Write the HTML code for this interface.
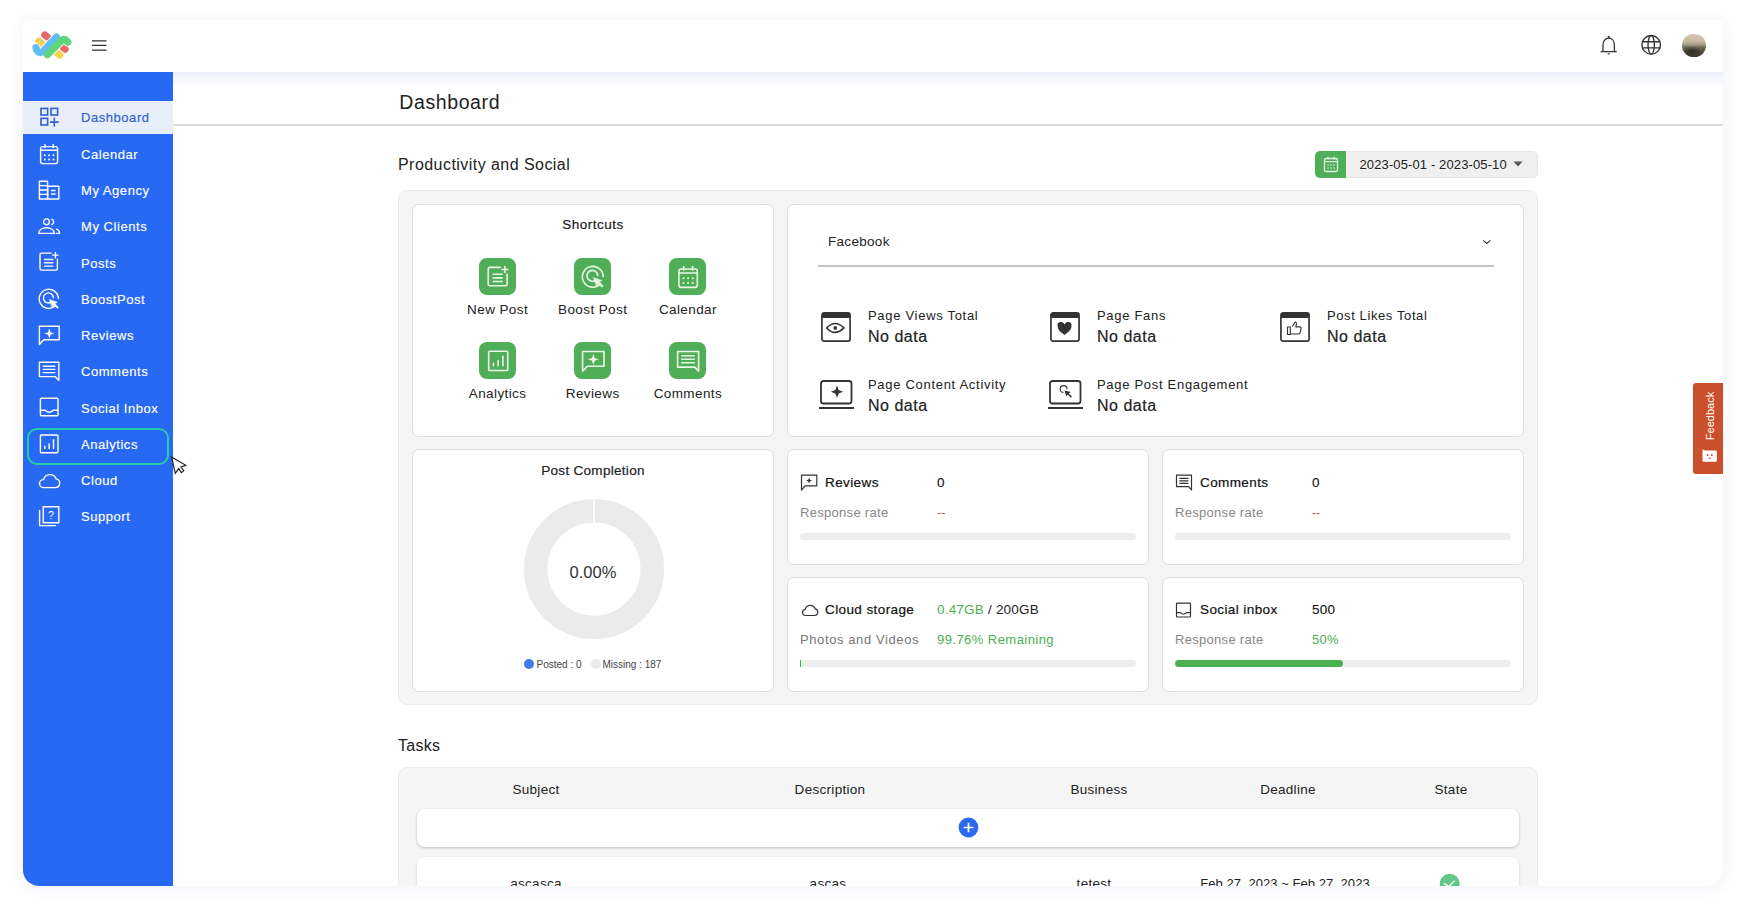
<!DOCTYPE html>
<html><head><meta charset="utf-8">
<style>
*{box-sizing:border-box;margin:0;padding:0}
html,body{width:1746px;height:914px;overflow:hidden;background:#fff;font-family:"Liberation Sans",sans-serif;color:#222}
.a{position:absolute}
.t{position:absolute;white-space:nowrap;line-height:1}
#frame{left:23px;top:20px;width:1700px;height:866px;border-radius:5px 5px 16px 16px;background:#fff;box-shadow:0 2px 16px rgba(40,60,150,0.07);overflow:hidden}
#hdr{left:23px;top:20px;width:1700px;height:52px;background:#fff;border-radius:5px 5px 0 0}
#hshadow{left:173px;top:72px;width:1550px;height:17px;background:linear-gradient(rgba(60,90,200,0.095),rgba(60,90,200,0.03) 60%,rgba(60,90,200,0))}
#side{left:23px;top:72px;width:150px;height:814px;background:#2869f4;border-bottom-left-radius:16px}
.si{position:absolute;left:23px;width:150px;height:33px}
.si svg{position:absolute}
.si span{position:absolute;left:58px;top:0;font-size:13px;line-height:33px;color:#fff;white-space:nowrap;letter-spacing:0.55px;-webkit-text-stroke:0.15px currentColor}

.card{position:absolute;background:#fff;border:1px solid #dedede;border-radius:7px}
.gbtn{position:absolute;width:37.5px;height:37.5px;background:#4fae57;border-radius:8px}
.gbtn svg{position:absolute;left:7px;top:7px}
.lbl{position:absolute;white-space:nowrap;font-size:13.5px;line-height:16px;color:#222;text-align:center;width:120px}
.mt{position:absolute;white-space:nowrap;font-size:13px;line-height:16px;color:#222}
.md{position:absolute;white-space:nowrap;font-size:16px;line-height:18px;color:#222;font-weight:bold}
.bar{position:absolute;height:7px;border-radius:4px;background:#eeeeee}
</style></head><body>
<div id="frame" class="a"></div>
<div id="hshadow" class="a"></div>
<div id="hdr" class="a"></div>
<div id="side" class="a"></div>

<!-- logo -->
<svg class="a" style="left:30px;top:28px" width="44" height="34" viewBox="0 0 44 34">
  <g stroke-linecap="round" fill="none">
    <line x1="14.8" y1="7" x2="17.4" y2="9.2" stroke="#ea6468" stroke-width="7"/>
    <line x1="9" y1="13.2" x2="11.4" y2="15.2" stroke="#f7cd52" stroke-width="7"/>
    <line x1="33" y1="19.4" x2="35.2" y2="21.2" stroke="#ec6a62" stroke-width="7"/>
    <line x1="27.6" y1="25.4" x2="29.8" y2="27.2" stroke="#f7d352" stroke-width="7"/>
    <path d="M6 19.6Q7 25.5 12.5 24L26.5 9" stroke="#fff" stroke-width="9"/>
    <path d="M17 27.2L31.6 12.4Q35 9.6 37.8 14.2" stroke="#fff" stroke-width="9"/>
    <path d="M6 19.6Q7 25.5 12.5 24L26.5 9" stroke="#62bdf2" stroke-width="7.2"/>
    <path d="M17.4 26.8L31.6 12.4Q35 9.6 37.8 14.2" stroke="#5fd57c" stroke-width="7.2"/>
  </g>
</svg>
<!-- hamburger -->
<svg class="a" style="left:91.5px;top:39px" width="15" height="12" viewBox="0 0 15 12">
  <path d="M0 1.8H14.5M0 6.4H14.5M0 11H14.5" stroke="#333" stroke-width="1.25"/>
</svg>

<!-- header right icons -->
<svg class="a" style="left:1598px;top:34px" width="21" height="23" viewBox="0 0 21 23">
  <path d="M5 17.7V11.2C5 7 7.4 4.1 10.7 4.1C14 4.1 16.4 7 16.4 11.2V17.7M2.6 17.7h16.2" stroke="#333" stroke-width="1.3" fill="none"/>
  <circle cx="10.7" cy="2.9" r="1.1" fill="#333"/>
  <path d="M9.1 19.2h3.2l-1.6 1.5z" fill="#333"/>
</svg>
<svg class="a" style="left:1640px;top:34px" width="22" height="22" viewBox="0 0 22 22">
  <g stroke="#333" stroke-width="1.4" fill="none">
    <circle cx="11.2" cy="10.8" r="9.3"/>
    <ellipse cx="11.2" cy="10.8" rx="3.2" ry="9.3"/>
    <path d="M2.4 7.7h17.6M2.4 13.9h17.6"/>
  </g>
</svg>
<div class="a" style="left:1682px;top:33.5px;width:23.5px;height:23.5px;border-radius:50%;background:radial-gradient(ellipse 38% 22% at 42% 74%,rgba(20,18,25,0.6),rgba(20,18,25,0) 100%),linear-gradient(180deg,#d9c4b0 0%,#c9baa0 30%,#a8a088 45%,#6e6a52 58%,#4a4634 80%,#3a3628 100%)"></div>

<!-- sidebar items -->
<div class="si" style="top:101px;background:#e7edf9;"><svg width="24" height="24" viewBox="0 0 24 24" style="left:14px;top:3.8px"><g stroke="#2f5fd3" stroke-width="1.6" fill="none"><rect x="4" y="3.4" width="6.6" height="6.6"/><rect x="14" y="3.4" width="6.6" height="6.6"/><rect x="4" y="13.4" width="6.6" height="6.6"/><path d="M17.3 12.8v8.6M13 17.1h8.6"/></g></svg><span style="color:#2f5fd3">Dashboard</span></div>
<div class="si" style="top:137.77px;"><svg width="24" height="24" viewBox="0 0 24 24" style="left:14px;top:3.8px"><g stroke="#fff" stroke-width="1.4" fill="none" stroke-linecap="round" stroke-linejoin="round"><rect x="3.6" y="4.6" width="17" height="17" rx="2"/><path d="M3.6 8.3h17M8 2.4v3.2M16.2 2.4v3.2"/></g><g fill="#fff"><circle cx="7.8" cy="13.2" r="0.95"/><circle cx="12.1" cy="13.2" r="0.95"/><circle cx="16.5" cy="13.2" r="0.95"/><circle cx="7.8" cy="17.5" r="0.95"/><circle cx="12.1" cy="17.5" r="0.95"/><circle cx="16.5" cy="17.5" r="0.95"/></g></svg><span style="color:#fff">Calendar</span></div>
<div class="si" style="top:174.04px;"><svg width="24" height="24" viewBox="0 0 24 24" style="left:14px;top:3.8px"><g stroke="#fff" stroke-width="1.4" fill="none" stroke-linecap="round" stroke-linejoin="round"><rect x="2.4" y="3.2" width="8.2" height="17.8"/><rect x="10.6" y="8.2" width="11.2" height="12.8"/><path d="M2.4 7.6h8.2M2.4 12h8.2M2.4 16.4h8.2M14.5 12.5h3.5M14.5 16h3.5"/></g></svg><span style="color:#fff">My Agency</span></div>
<div class="si" style="top:210.31px;"><svg width="24" height="24" viewBox="0 0 24 24" style="left:14px;top:3.8px"><g stroke="#fff" stroke-width="1.4" fill="none" stroke-linecap="round" stroke-linejoin="round"><circle cx="9.5" cy="7.8" r="2.9"/><path d="M1.8 19.4c0-3.6 3.4-5.6 7.7-5.6s7.7 2 7.7 5.6z"/><path d="M14.8 5.2a2.9 2.9 0 0 1 0 5.4" /><path d="M19.2 19.4h3.4c0-2.2-1.2-3.6-3.2-4.2"/></g></svg><span style="color:#fff">My Clients</span></div>
<div class="si" style="top:246.58px;"><svg width="24" height="24" viewBox="0 0 24 24" style="left:14px;top:3.8px"><g stroke="#fff" stroke-width="1.4" fill="none" stroke-linecap="round" stroke-linejoin="round"><path d="M14.2 3.1H4.5Q3 3.1 3 4.6V18.6Q3 20.1 4.5 20.1H18.9Q20.4 20.1 20.4 18.6V9.3"/><path d="M18.4 2.4v5.4M15.7 5.1h5.4M7.5 9.5h8.3M7.5 12.8h8.3M7.5 16.1h8.3"/></g></svg><span style="color:#fff">Posts</span></div>
<div class="si" style="top:282.85px;"><svg width="24" height="24" viewBox="0 0 24 24" style="left:14px;top:3.8px"><g stroke="#fff" stroke-width="1.4" fill="none" stroke-linecap="round" stroke-linejoin="round"><path d="M18.6 18.6A9.6 9.6 0 1 1 21.4 11.6"/><path d="M14.8 14.6A5 5 0 1 1 16.4 10.8"/><path d="M12.4 12.4L20.4 15.2L17.9 16.6L21.6 20.3L20.3 21.6L16.6 17.9L15.2 20.4z" fill="#fff" stroke="#fff" stroke-width="0.4"/></g></svg><span style="color:#fff">BoostPost</span></div>
<div class="si" style="top:319.12px;"><svg width="24" height="24" viewBox="0 0 24 24" style="left:14px;top:3.8px"><g stroke="#fff" stroke-width="1.4" fill="none" stroke-linecap="round" stroke-linejoin="round"><path d="M2.4 21.4V3.2H22.2V16.8H6.8z"/></g><path d="M12.3 5.6l1.3 3.6 3.6 1.3-3.6 1.3-1.3 3.6-1.3-3.6-3.6-1.3 3.6-1.3z" fill="#fff"/></svg><span style="color:#fff">Reviews</span></div>
<div class="si" style="top:355.39px;"><svg width="24" height="24" viewBox="0 0 24 24" style="left:14px;top:3.8px"><g stroke="#fff" stroke-width="1.4" fill="none" stroke-linecap="round" stroke-linejoin="round"><path d="M2.4 3.2H21.8V21.4L18.2 17.6H2.4z"/><path d="M6.2 7.2h11.6M6.2 10.4h11.6M6.2 13.6h11.6"/></g></svg><span style="color:#fff">Comments</span></div>
<div class="si" style="top:391.66px;"><svg width="24" height="24" viewBox="0 0 24 24" style="left:14px;top:3.8px"><g stroke="#fff" stroke-width="1.4" fill="none" stroke-linecap="round" stroke-linejoin="round"><rect x="3.4" y="3.2" width="17.6" height="17.6" rx="1"/><path d="M3.4 15.2H8.2Q12.2 19.2 16.2 15.2H21"/></g></svg><span style="color:#fff">Social Inbox</span></div>
<div class="si" style="top:427.93px;"><svg width="24" height="24" viewBox="0 0 24 24" style="left:14px;top:3.8px"><g stroke="#fff" stroke-width="1.4" fill="none" stroke-linecap="round" stroke-linejoin="round"><rect x="3.4" y="3" width="17.6" height="17.8" rx="1"/><path d="M7.8 16.4v-2.2M12.1 16.4v-4.6M16.5 16.4V7.6"/></g></svg><span style="color:#fff">Analytics</span></div>
<div class="si" style="top:464.20px;"><svg width="24" height="24" viewBox="0 0 24 24" style="left:14px;top:3.8px"><g stroke="#fff" stroke-width="1.4" fill="none" stroke-linecap="round" stroke-linejoin="round"><path d="M6.4 19.6H18.2A4.4 4.4 0 0 0 19.2 10.9A6.6 6.6 0 0 0 6.6 11.6A4 4 0 0 0 6.4 19.6Z"/></g></svg><span style="color:#fff">Cloud</span></div>
<div class="si" style="top:500.47px;"><svg width="24" height="24" viewBox="0 0 24 24" style="left:14px;top:3.8px"><g stroke="#fff" stroke-width="1.4" fill="none" stroke-linecap="round" stroke-linejoin="round"><rect x="6.2" y="2.8" width="15.6" height="16"/><path d="M2.6 6.4V21.6H18.4"/></g><text x="14" y="15" font-size="10.5" fill="#fff" text-anchor="middle" font-family="Liberation Sans">?</text></svg><span style="color:#fff">Support</span></div>
<div class="a" style="left:27px;top:427.5px;width:142px;height:37px;border:2.3px solid #25cdaa;border-radius:10px"></div>

<!-- main -->
<div class="t" style="left:399.3px;top:90.3px;font-size:19.5px;line-height:24px;color:#222;letter-spacing:0.6px">Dashboard</div>
<div class="a" style="left:173px;top:124px;width:1550px;height:2px;background:#dcdcdc"></div>
<div class="t" style="left:398px;top:155px;font-size:16px;line-height:20px;color:#222;letter-spacing:0.45px">Productivity and Social</div>

<!-- date picker -->
<div class="a" style="left:1315px;top:151px;width:223px;height:27px;background:#efefef;border-radius:5px;border:1px solid #e6e6e6"></div>
<div class="a" style="left:1315px;top:151px;width:31px;height:27px;background:#4fae57;border-radius:5px 0 0 5px"></div>
<svg class="a" style="left:1322px;top:155px" width="18" height="19" viewBox="0 0 18 19"><g stroke="#dff5df" stroke-width="1.3" fill="none"><rect x="2.5" y="3.5" width="13" height="13" rx="1.5"/><path d="M2.5 6.6h13M6 1.8v2.8M12 1.8v2.8"/></g><g fill="#dff5df"><circle cx="6" cy="10" r=".8"/><circle cx="9" cy="10" r=".8"/><circle cx="12" cy="10" r=".8"/><circle cx="6" cy="13" r=".8"/><circle cx="9" cy="13" r=".8"/><circle cx="12" cy="13" r=".8"/></g></svg>
<div class="t" style="left:1359.5px;top:157px;font-size:13px;line-height:16px;color:#222;letter-spacing:0.12px">2023-05-01 - 2023-05-10</div>
<svg class="a" style="left:1513px;top:161px" width="10" height="6" viewBox="0 0 10 6"><path d="M0.5 0.5h9L5 5.5z" fill="#555"/></svg>

<!-- gray panel -->
<div class="a" style="left:398px;top:190px;width:1140px;height:515px;background:#f5f5f5;border:1px solid #ebebeb;border-radius:9px"></div>

<!-- shortcuts card -->
<div class="card" style="left:412px;top:204px;width:362px;height:233px"></div>
<div class="t" style="left:533px;top:217px;width:120px;text-align:center;font-size:13.5px;line-height:16px;color:#222;-webkit-text-stroke:0.2px #222;letter-spacing:0.5px">Shortcuts</div>
<div class="gbtn" style="left:478.6px;top:257.5px"><svg width="26" height="26" viewBox="0 0 24 24" style="left:6px;top:6px"><g stroke="#eaf6e4" stroke-width="1.5" fill="none" stroke-linecap="round" stroke-linejoin="round"><path d="M14.2 3.1H4.5Q3 3.1 3 4.6V18.6Q3 20.1 4.5 20.1H18.9Q20.4 20.1 20.4 18.6V9.3"/><path d="M18.4 2.4v5.4M15.7 5.1h5.4M7.5 9.5h8.3M7.5 12.8h8.3M7.5 16.1h8.3"/></g></svg></div>
<div class="lbl" style="left:437.6px;top:301.5px;letter-spacing:0.4px">New Post</div>
<div class="gbtn" style="left:573.7px;top:257.5px"><svg width="26" height="26" viewBox="0 0 24 24" style="left:6px;top:6px"><g stroke="#eaf6e4" stroke-width="1.5" fill="none" stroke-linecap="round" stroke-linejoin="round"><path d="M18.6 18.6A9.6 9.6 0 1 1 21.4 11.6"/><path d="M14.8 14.6A5 5 0 1 1 16.4 10.8"/><path d="M12.4 12.4L20.4 15.2L17.9 16.6L21.6 20.3L20.3 21.6L16.6 17.9L15.2 20.4z" fill="#eaf6e4" stroke="#eaf6e4" stroke-width="0.4"/></g></svg></div>
<div class="lbl" style="left:532.7px;top:301.5px;letter-spacing:0.4px">Boost Post</div>
<div class="gbtn" style="left:668.9px;top:257.5px"><svg width="26" height="26" viewBox="0 0 24 24" style="left:6px;top:6px"><g stroke="#eaf6e4" stroke-width="1.5" fill="none" stroke-linecap="round" stroke-linejoin="round"><rect x="3.6" y="4.6" width="17" height="17" rx="2"/><path d="M3.6 8.3h17M8 2.4v3.2M16.2 2.4v3.2"/></g><g fill="#eaf6e4"><circle cx="7.8" cy="13.2" r="0.95"/><circle cx="12.1" cy="13.2" r="0.95"/><circle cx="16.5" cy="13.2" r="0.95"/><circle cx="7.8" cy="17.5" r="0.95"/><circle cx="12.1" cy="17.5" r="0.95"/><circle cx="16.5" cy="17.5" r="0.95"/></g></svg></div>
<div class="lbl" style="left:627.9px;top:301.5px;letter-spacing:0.4px">Calendar</div>
<div class="gbtn" style="left:478.6px;top:341.8px"><svg width="26" height="26" viewBox="0 0 24 24" style="left:6px;top:6px"><g stroke="#eaf6e4" stroke-width="1.5" fill="none" stroke-linecap="round" stroke-linejoin="round"><rect x="3.4" y="3" width="17.6" height="17.8" rx="1"/><path d="M7.8 16.4v-2.2M12.1 16.4v-4.6M16.5 16.4V7.6"/></g></svg></div>
<div class="lbl" style="left:437.6px;top:385.8px;letter-spacing:0.4px">Analytics</div>
<div class="gbtn" style="left:573.7px;top:341.8px"><svg width="26" height="26" viewBox="0 0 24 24" style="left:6px;top:6px"><g stroke="#eaf6e4" stroke-width="1.5" fill="none" stroke-linecap="round" stroke-linejoin="round"><path d="M2.4 21.4V3.2H22.2V16.8H6.8z"/></g><path d="M12.3 5.6l1.3 3.6 3.6 1.3-3.6 1.3-1.3 3.6-1.3-3.6-3.6-1.3 3.6-1.3z" fill="#eaf6e4"/></svg></div>
<div class="lbl" style="left:532.7px;top:385.8px;letter-spacing:0.4px">Reviews</div>
<div class="gbtn" style="left:668.9px;top:341.8px"><svg width="26" height="26" viewBox="0 0 24 24" style="left:6px;top:6px"><g stroke="#eaf6e4" stroke-width="1.5" fill="none" stroke-linecap="round" stroke-linejoin="round"><path d="M2.4 3.2H21.8V21.4L18.2 17.6H2.4z"/><path d="M6.2 7.2h11.6M6.2 10.4h11.6M6.2 13.6h11.6"/></g></svg></div>
<div class="lbl" style="left:627.9px;top:385.8px;letter-spacing:0.4px">Comments</div>

<!-- facebook card -->
<div class="card" style="left:787px;top:204px;width:737px;height:233px"></div>
<div class="t" style="left:828px;top:234px;font-size:13.5px;line-height:16px;color:#222;letter-spacing:0.3px">Facebook</div>
<svg class="a" style="left:1482px;top:239px" width="10" height="7" viewBox="0 0 10 7"><path d="M1.1 1.4L4.8 4.5L8.5 1.4" stroke="#333" stroke-width="1.05" fill="none"/></svg>
<div class="a" style="left:818px;top:265px;width:676px;height:1.5px;background:#c4c4c4"></div>
<svg class="a" width="30" height="30" viewBox="0 0 32 32" style="left:821px;top:312px"><rect x="1" y="1" width="30" height="30" rx="2.2" stroke="#333" stroke-width="1.8" fill="none"/><rect x="1" y="1" width="30" height="5.5" rx="1.5" fill="#333"/><path d="M6 17Q15 7.5 24.5 17Q15 26.5 6 17z" stroke="#333" stroke-width="1.7" fill="none" stroke-linecap="round" stroke-linejoin="round"/><circle cx="15.2" cy="17" r="2" fill="#333"/></svg>
<div class="mt" style="left:868px;top:308px;letter-spacing:0.7px">Page Views Total</div>
<div class="md" style="left:868px;top:328px;font-weight:normal;letter-spacing:0.5px;-webkit-text-stroke:0.2px #222">No data</div>
<svg class="a" width="30" height="30" viewBox="0 0 32 32" style="left:1050px;top:312px"><rect x="1" y="1" width="30" height="30" rx="2.2" stroke="#333" stroke-width="1.8" fill="none"/><rect x="1" y="1" width="30" height="5.5" rx="1.5" fill="#333"/><path d="M15.5 24.5C11 21 8.2 18.6 8.2 15.4A3.6 3.6 0 0 1 15.5 13.4A3.6 3.6 0 0 1 22.8 15.4C22.8 18.6 20 21 15.5 24.5z" fill="#333"/></svg>
<div class="mt" style="left:1097px;top:308px;letter-spacing:0.7px">Page Fans</div>
<div class="md" style="left:1097px;top:328px;font-weight:normal;letter-spacing:0.5px;-webkit-text-stroke:0.2px #222">No data</div>
<svg class="a" width="30" height="30" viewBox="0 0 32 32" style="left:1280px;top:312px"><rect x="1" y="1" width="30" height="30" rx="2.2" stroke="#333" stroke-width="1.8" fill="none"/><rect x="1" y="1" width="30" height="5.5" rx="1.5" fill="#333"/><path d="M8 16h3v8H8zM11 23.5h8.5c1.5 0 2-1 2.2-2l.8-4c.2-1-.5-1.6-1.4-1.6h-4.2l.6-3.2c.2-1.2-.6-2-1.4-2l-3 4.8" stroke="#333" stroke-width="1.2" fill="none" stroke-linejoin="round"/></svg>
<div class="mt" style="left:1327px;top:308px;letter-spacing:0.6px">Post Likes Total</div>
<div class="md" style="left:1327px;top:328px;font-weight:normal;letter-spacing:0.5px;-webkit-text-stroke:0.2px #222">No data</div>
<svg class="a" width="38" height="32" viewBox="0 0 38 32" style="left:818px;top:380px"><rect x="3" y="1" width="30.5" height="22.5" rx="2.5" stroke="#333" stroke-width="1.8" fill="none"/><path d="M1 28h35" stroke="#333" stroke-width="2"/><path d="M19 5.6l1.7 4.4 4.4 1.7-4.4 1.7-1.7 4.4-1.7-4.4-4.4-1.7 4.4-1.7z" fill="#333"/></svg>
<div class="mt" style="left:868px;top:377px;letter-spacing:0.7px">Page Content Activity</div>
<div class="md" style="left:868px;top:397px;font-weight:normal;letter-spacing:0.5px;-webkit-text-stroke:0.2px #222">No data</div>
<svg class="a" width="38" height="32" viewBox="0 0 38 32" style="left:1047px;top:380px"><rect x="3" y="1" width="30.5" height="22.5" rx="2.5" stroke="#333" stroke-width="1.8" fill="none"/><path d="M1 28h35" stroke="#333" stroke-width="2"/><path d="M16.4 12.4A3.4 3.4 0 1 1 20 9" stroke="#333" stroke-width="1.1" fill="none"/><path d="M17.6 10.4l1.6 6.2 1.4-2.1 3.2 3.2 1.1-1.1-3.2-3.2 2.1-1.4z" fill="#333"/></svg>
<div class="mt" style="left:1097px;top:377px;letter-spacing:0.7px">Page Post Engagement</div>
<div class="md" style="left:1097px;top:397px;font-weight:normal;letter-spacing:0.5px;-webkit-text-stroke:0.2px #222">No data</div>

<!-- post completion -->
<div class="card" style="left:412px;top:449px;width:362px;height:243px"></div>
<div class="t" style="left:533px;top:463px;width:120px;text-align:center;font-size:13.5px;line-height:16px;color:#222;-webkit-text-stroke:0.2px #222;letter-spacing:0.3px">Post Completion</div>
<svg class="a" style="left:518px;top:493px" width="152" height="152" viewBox="0 0 152 152">
  <circle cx="76" cy="76" r="58.3" stroke="#ebebeb" stroke-width="23.5" fill="none"/>
  <path d="M76 5V29" stroke="#fff" stroke-width="1.6"/>
</svg>
<div class="t" style="left:533px;top:563px;width:120px;text-align:center;font-size:16.5px;line-height:18px;color:#333">0.00%</div>
<div class="a" style="left:523.5px;top:658.5px;width:10px;height:10px;border-radius:50%;background:#3f7de8"></div>
<div class="t" style="left:536.5px;top:658.5px;font-size:10px;line-height:12px;color:#444">Posted : 0</div>
<div class="a" style="left:590.5px;top:658.5px;width:10px;height:10px;border-radius:50%;background:#ebebeb"></div>
<div class="t" style="left:602.5px;top:658.5px;font-size:10px;line-height:12px;color:#444">Missing : 187</div>

<!-- reviews card -->
<div class="card" style="left:787px;top:449px;width:362px;height:116px"></div>
<svg class="a" style="left:800px;top:474px" width="18" height="17" viewBox="0 0 18 17"><path d="M1.5 16V1.2H16.8V11.8H5z" stroke="#333" stroke-width="1.2" fill="none" stroke-linejoin="round"/><path d="M9.1 3.6l.8 2.2 2.2.8-2.2.8-.8 2.2-.8-2.2-2.2-.8 2.2-.8z" fill="#333"/></svg>
<div class="t" style="left:825px;top:475px;font-size:13.5px;line-height:16px;color:#111;-webkit-text-stroke:0.2px #111;letter-spacing:0.4px">Reviews</div>
<div class="t" style="left:937px;top:475px;font-size:13.5px;line-height:16px;color:#111;-webkit-text-stroke:0.1px #111">0</div>
<div class="t" style="left:800px;top:505px;font-size:13px;line-height:16px;color:#888;letter-spacing:0.3px">Response rate</div>
<div class="t" style="left:937px;top:505px;font-size:13px;line-height:16px;color:#e05555">--</div>
<div class="bar" style="left:800px;top:533px;width:336px"></div>

<!-- comments card -->
<div class="card" style="left:1162px;top:449px;width:362px;height:116px"></div>
<svg class="a" style="left:1175px;top:474px" width="18" height="17" viewBox="0 0 18 17"><path d="M1.5 1.2H16.5V15.8L13.6 12.6H1.5z" stroke="#333" stroke-width="1.2" fill="none" stroke-linejoin="round"/><path d="M4.4 4.4h9M4.4 6.9h9M4.4 9.4h9" stroke="#333" stroke-width="1.1"/></svg>
<div class="t" style="left:1200px;top:475px;font-size:13.5px;line-height:16px;color:#111;-webkit-text-stroke:0.2px #111;letter-spacing:0.4px">Comments</div>
<div class="t" style="left:1312px;top:475px;font-size:13.5px;line-height:16px;color:#111;-webkit-text-stroke:0.1px #111">0</div>
<div class="t" style="left:1175px;top:505px;font-size:13px;line-height:16px;color:#888;letter-spacing:0.3px">Response rate</div>
<div class="t" style="left:1312px;top:505px;font-size:13px;line-height:16px;color:#e05555">--</div>
<div class="bar" style="left:1175px;top:533px;width:336px"></div>

<!-- cloud card -->
<div class="card" style="left:787px;top:577px;width:362px;height:115px"></div>
<svg class="a" style="left:800px;top:602px" width="19" height="15" viewBox="0 0 19 15"><path d="M5 13.5H14.5A3.4 3.4 0 0 0 15.2 6.8A5.2 5.2 0 0 0 5.2 7.4A3.1 3.1 0 0 0 5 13.5Z" stroke="#333" stroke-width="1.2" fill="none"/></svg>
<div class="t" style="left:825px;top:602px;font-size:13.5px;line-height:16px;color:#111;-webkit-text-stroke:0.2px #111;letter-spacing:0.4px">Cloud storage</div>
<div class="t" style="left:937px;top:602px;font-size:13.5px;line-height:16px;color:#4caf50;letter-spacing:0.2px">0.47GB</div>
<div class="t" style="left:988px;top:602px;font-size:13.5px;line-height:16px;color:#222;letter-spacing:0.2px">/ 200GB</div>
<div class="t" style="left:800px;top:632px;font-size:13px;line-height:16px;color:#777;letter-spacing:0.6px">Photos and Videos</div>
<div class="t" style="left:937px;top:632px;font-size:13px;line-height:16px;color:#4caf50;letter-spacing:0.45px">99.76% Remaining</div>
<div class="bar" style="left:800px;top:660px;width:336px"></div>
<div class="a" style="left:800px;top:660px;width:1.2px;height:7px;background:#4caf50"></div>

<!-- social inbox card -->
<div class="card" style="left:1162px;top:577px;width:362px;height:115px"></div>
<svg class="a" style="left:1175px;top:602px" width="17" height="16" viewBox="0 0 17 16"><rect x="1.5" y="1.2" width="14" height="13.8" rx="0.8" stroke="#333" stroke-width="1.2" fill="none"/><path d="M1.5 10.6H5.4Q8.5 13.8 11.6 10.6H15.5" stroke="#333" stroke-width="1.1" fill="none"/></svg>
<div class="t" style="left:1200px;top:602px;font-size:13.5px;line-height:16px;color:#111;-webkit-text-stroke:0.2px #111;letter-spacing:0.4px">Social inbox</div>
<div class="t" style="left:1312px;top:602px;font-size:13.5px;line-height:16px;color:#111;-webkit-text-stroke:0.1px #111;letter-spacing:0.3px">500</div>
<div class="t" style="left:1175px;top:632px;font-size:13px;line-height:16px;color:#888;letter-spacing:0.3px">Response rate</div>
<div class="t" style="left:1312px;top:632px;font-size:13px;line-height:16px;color:#4caf50;letter-spacing:0.3px">50%</div>
<div class="bar" style="left:1175px;top:660px;width:336px"></div>
<div class="bar" style="left:1175px;top:660px;width:168px;background:#4caf50"></div>

<div class="a" style="left:0;top:0;width:1746px;height:886px;overflow:hidden">
<!-- tasks -->
<div class="t" style="left:398px;top:736px;font-size:16px;line-height:20px;color:#222;letter-spacing:0.3px">Tasks</div>
<div class="a" style="left:398px;top:767px;width:1140px;height:140px;background:#f5f5f5;border:1px solid #ebebeb;border-radius:9px"></div>
<div class="t" style="left:476px;top:782px;width:120px;text-align:center;font-size:13.5px;line-height:16px;color:#222;letter-spacing:0.3px">Subject</div>
<div class="t" style="left:770px;top:782px;width:120px;text-align:center;font-size:13.5px;line-height:16px;color:#222;letter-spacing:0.3px">Description</div>
<div class="t" style="left:1039px;top:782px;width:120px;text-align:center;font-size:13.5px;line-height:16px;color:#222;letter-spacing:0.3px">Business</div>
<div class="t" style="left:1228px;top:782px;width:120px;text-align:center;font-size:13.5px;line-height:16px;color:#222;letter-spacing:0.3px">Deadline</div>
<div class="t" style="left:1391px;top:782px;width:120px;text-align:center;font-size:13.5px;line-height:16px;color:#222;letter-spacing:0.3px">State</div>
<div class="a" style="left:417px;top:809px;width:1102px;height:38px;background:#fff;border-radius:8px;box-shadow:0 1px 3px rgba(0,0,0,0.22)"></div>
<svg class="a" style="left:957.5px;top:817.4px" width="21" height="21" viewBox="0 0 21 21"><circle cx="10.5" cy="10.5" r="9.9" fill="#2a69f0"/><path d="M10.5 5.7v9.6M5.7 10.5h9.6" stroke="#fff" stroke-width="1.7"/></svg>
<div class="a" style="left:417px;top:857px;width:1102px;height:50px;background:#fff;border-radius:8px;box-shadow:0 1px 3px rgba(0,0,0,0.15)"></div>
<div class="t" style="left:476px;top:876px;width:120px;text-align:center;font-size:13.5px;line-height:16px;color:#222;letter-spacing:0.3px">ascasca</div>
<div class="t" style="left:768px;top:876px;width:120px;text-align:center;font-size:13.5px;line-height:16px;color:#222;letter-spacing:0.3px">ascas</div>
<div class="t" style="left:1034px;top:876px;width:120px;text-align:center;font-size:13.5px;line-height:16px;color:#222;letter-spacing:0.3px">tetest</div>
<div class="t" style="left:1185px;top:876px;width:200px;text-align:center;font-size:13px;line-height:16px;color:#222;letter-spacing:0.05px">Feb 27, 2023 ~ Feb 27, 2023</div>
<svg class="a" style="left:1439px;top:873px" width="21" height="21" viewBox="0 0 21 21"><circle cx="10.7" cy="10.7" r="10" fill="#62c887"/><path d="M5 10.4L9.5 13.6L15.7 7.6" stroke="#fff" stroke-width="1.3" fill="none"/></svg>

</div>
<!-- feedback tab -->
<div class="a" style="left:1693px;top:383px;width:30px;height:91px;background:#c9502a;border-radius:3px 0 0 3px"></div>
<div class="t" style="left:1670px;top:410px;width:80px;height:14px;text-align:center;font-size:11px;line-height:14px;color:#fff;transform:rotate(-90deg);transform-origin:40px 7px;top:409px">Feedback</div>
<svg class="a" style="left:1701px;top:448px" width="17" height="15" viewBox="0 0 17 15"><path d="M1.5 1.2L4 2.6H14.6Q15.8 2.6 15.8 3.8V12.6Q15.8 13.8 14.6 13.8H2.7Q1.5 13.8 1.5 12.6z" fill="#fff"/><circle cx="6.6" cy="7" r=".95" fill="#c9502a"/><circle cx="10.8" cy="7" r=".95" fill="#c9502a"/><path d="M6.6 9.8Q8.7 11.8 10.8 9.8z" fill="#c9502a"/></svg>

<!-- cursor -->
<svg class="a" style="left:168px;top:454px" width="22" height="22" viewBox="0 0 22 22"><path d="M3.6 3L17.8 11.3L13 13L15.8 16.6L13.4 18.6L10.6 14.6L7.3 19.4z" fill="#fff" stroke="#1a1a1a" stroke-width="1.15" stroke-linejoin="miter"/></svg>
</body></html>
